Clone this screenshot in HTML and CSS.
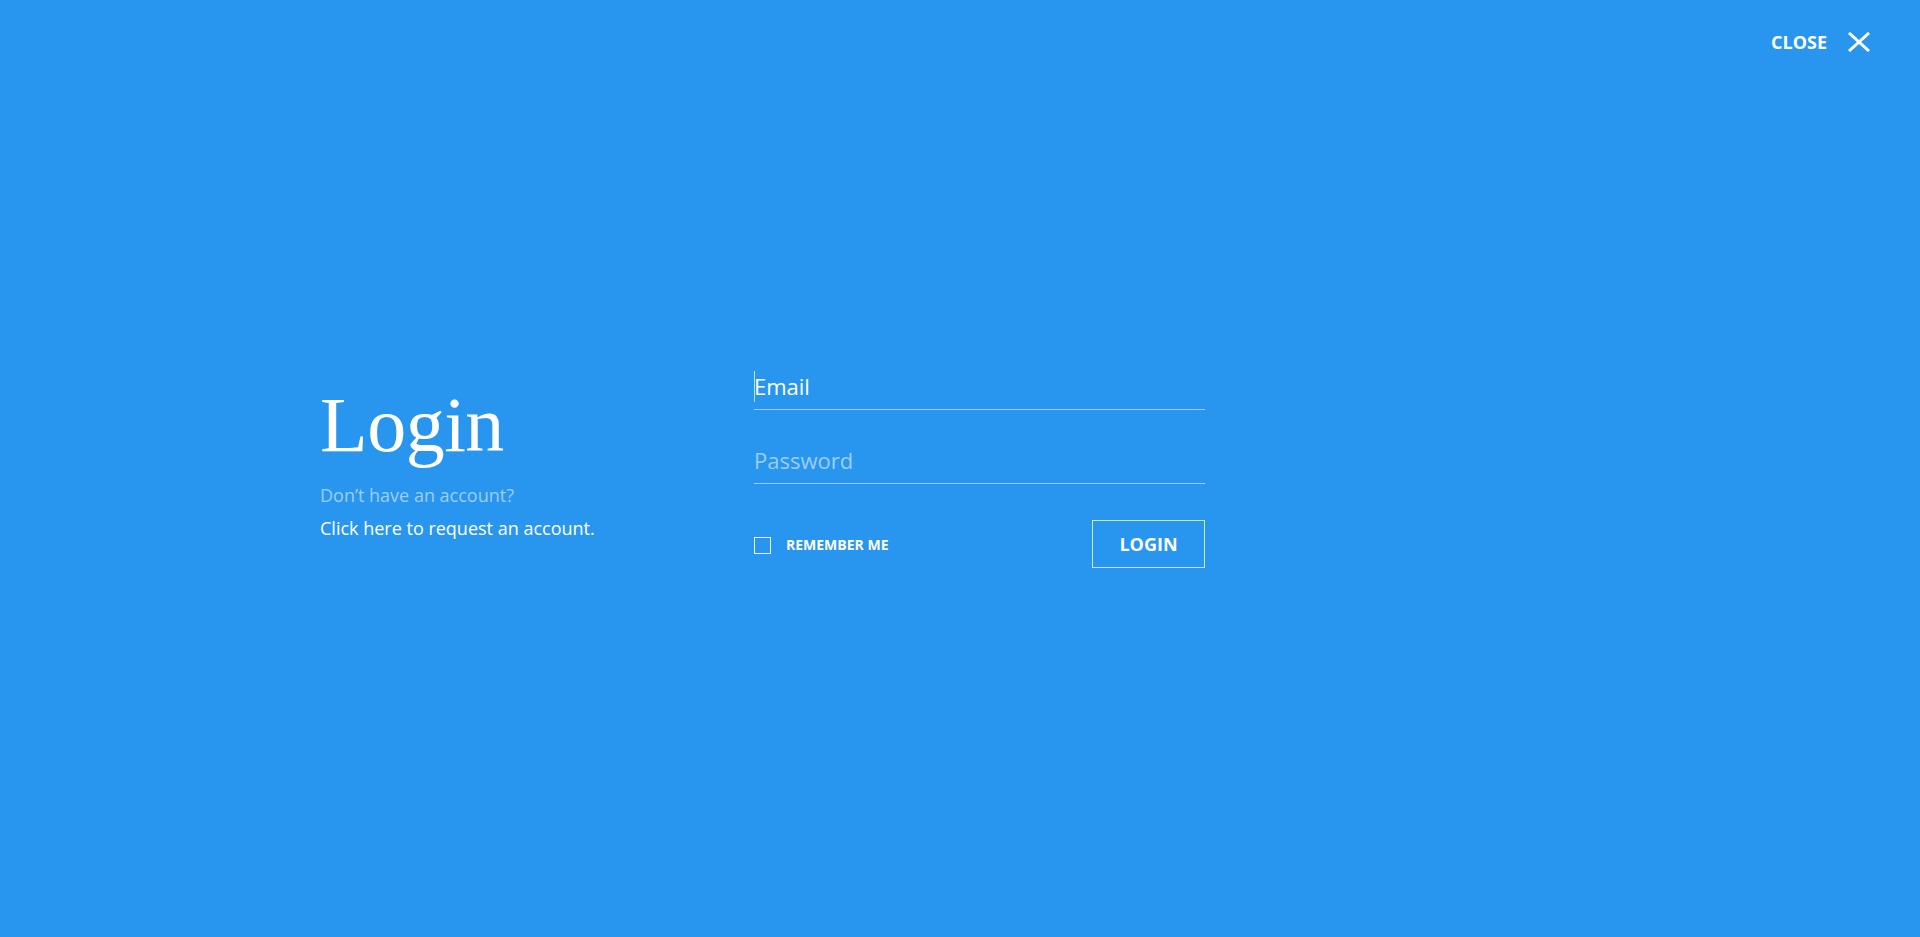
FILE: index.html
```html
<!DOCTYPE html>
<html lang="en">
<head>
<meta charset="utf-8">
<title>Login</title>
<link rel="stylesheet" href="styles.css">
</head>
<body>
<div class="overlay">
  <a class="close" href="#">
    <span class="close-label">CLOSE</span>
    <svg class="close-icon" width="22" height="20" viewBox="0 0 22 20" aria-hidden="true">
      <line x1="1" y1="1" x2="21" y2="19" stroke="#fff" stroke-width="3"/>
      <line x1="21" y1="1" x2="1" y2="19" stroke="#fff" stroke-width="3"/>
    </svg>
  </a>
  <main class="content">
    <section class="intro">
      <h1 class="title">Login</h1>
      <p class="muted">Don’t have an account?</p>
      <a class="request" href="#">Click here to request an account.</a>
    </section>
    <form class="form">
      <div class="field field-email">
        <span class="caret"></span>
        <input class="input input-email" type="email" placeholder="Email">
      </div>
      <div class="field field-password">
        <input class="input input-password" type="password" placeholder="Password">
      </div>
      <div class="actions">
        <label class="remember">
          <span class="box"></span>
          <span class="remember-text">REMEMBER ME</span>
        </label>
        <button class="btn" type="button">LOGIN</button>
      </div>
    </form>
  </main>
</div>
</body>
</html>
```
FILE: styles.css
```css
* { box-sizing: border-box; }
html, body {
  margin: 0;
  padding: 0;
  height: 100%;
}
body {
  background: #2896ee;
  color: #fff;
  font-family: "Open Sans", "Liberation Sans", sans-serif;
}
.overlay {
  position: relative;
  height: 100vh;
  display: flex;
  align-items: center;
  padding-top: 2px;
}
.close {
  position: absolute;
  top: 30px;
  right: 50px;
  display: flex;
  align-items: center;
  gap: 21px;
  color: #fff;
  text-decoration: none;
}
.close-label {
  font-size: 18px;
  font-weight: 700;
  line-height: 24px;
}
.close-icon { display: block; }
.content {
  width: 1280px;
  margin: 0 auto;
  display: flex;
  align-items: flex-start;
}
.intro {
  width: 434px;
  padding-top: 15px;
}
.title {
  margin: 0 0 15px;
  font-family: "Liberation Serif", "DejaVu Serif", serif;
  font-weight: 400;
  font-size: 78px;
  line-height: 78px;
  letter-spacing: -0.5px;
}
.muted {
  margin: 0;
  font-size: 18px;
  line-height: 33px;
  color: rgba(255, 255, 255, 0.55);
}
.request {
  display: block;
  font-size: 18px;
  line-height: 33px;
  color: #fff;
  text-decoration: none;
}
.form {
  width: 451px;
  margin: 0;
}
.field {
  position: relative;
  border-bottom: 1px solid rgba(255, 255, 255, 0.55);
  padding-bottom: 8px;
}
.field-password { margin-top: 35px; }
.input {
  display: block;
  width: 100%;
  border: 0;
  outline: 0;
  background: transparent;
  padding: 0;
  margin: 0;
  font-family: "Open Sans", "Liberation Sans", sans-serif;
  font-size: 22px;
  line-height: 30px;
  height: 30px;
  color: #fff;
}
.input-email::placeholder { color: #fff; opacity: 1; }
.input-password::placeholder { color: rgba(255, 255, 255, 0.55); opacity: 1; }
.caret {
  position: absolute;
  left: 0;
  top: 0;
  width: 1px;
  height: 31px;
  background: rgba(255, 255, 255, 0.7);
}
.actions {
  margin-top: 36px;
  display: flex;
  align-items: center;
  justify-content: space-between;
}
.remember {
  display: flex;
  align-items: center;
  gap: 15px;
  margin-top: 2px;
}
.box {
  width: 17px;
  height: 17px;
  border: 1.5px solid rgba(255, 255, 255, 0.9);
}
.remember-text {
  font-size: 14px;
  font-weight: 700;
  line-height: 20px;
}
.btn {
  width: 113px;
  height: 48px;
  background: transparent;
  border: 1px solid rgba(255, 255, 255, 0.75);
  color: #fff;
  font-family: "Open Sans", "Liberation Sans", sans-serif;
  font-size: 18px;
  font-weight: 700;
  padding: 0;
  cursor: pointer;
}
```
